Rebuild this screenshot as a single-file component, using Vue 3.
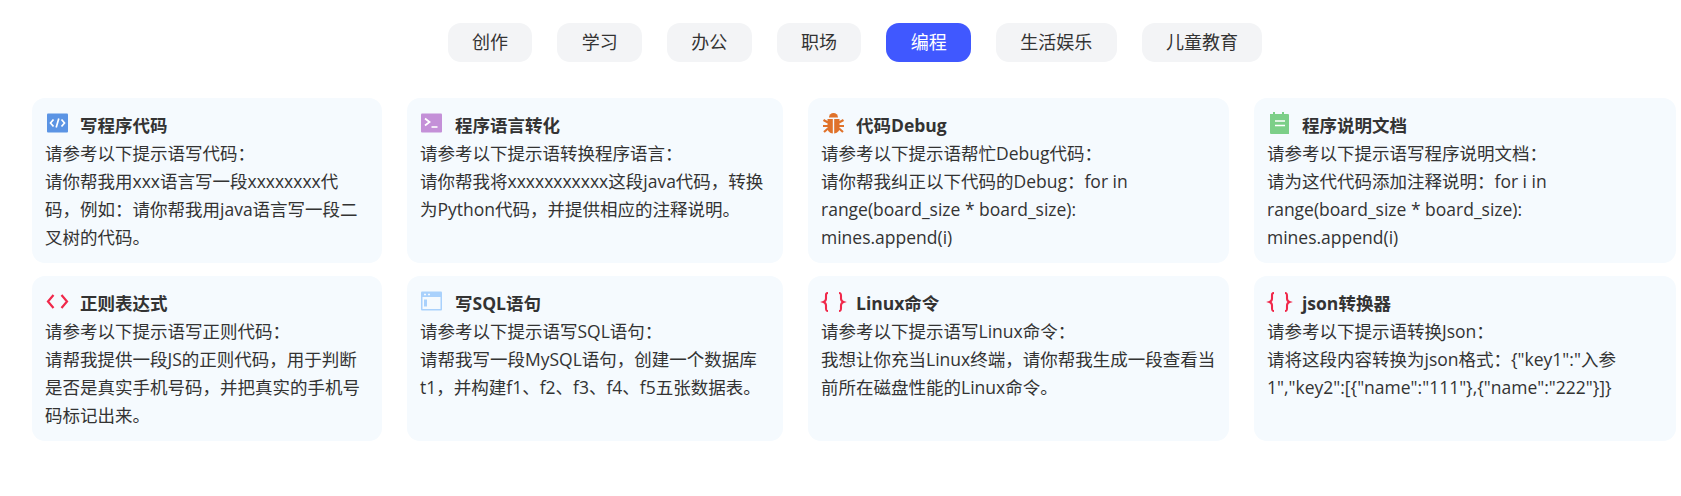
<template>
  <div class="page">
    <!-- 分类标签 -->
    <div class="tabs">
      <div
        v-for="tab in tabs"
        :key="tab"
        class="tab"
        :class="{ active: tab === activeTab }"
      >
        {{ tab }}
      </div>
    </div>

    <!-- 提示语卡片 -->
    <div class="cards">
      <div v-for="card in cards" :key="card.title" class="card">
        <div class="card-title">
          <svg class="icon" viewBox="0 0 24 24" width="24" height="24">
            <template v-if="card.icon === 'code'">
              <rect x="2" y="2.5" width="21" height="19" rx="1" fill="#5b94e4" />
              <path d="M8.5 8.5 5.5 12l3 3.500M16.500 8.500l3 3.500-3 3.500M13.800 7.500l-2.600 9" fill="none" stroke="#fff" stroke-width="1.700" />
            </template>
            <template v-else-if="card.icon === 'terminal'">
              <rect x="1" y="2.500" width="21" height="19" rx="1" fill="#c490d8" />
              <path d="M5 7.500 9.500 11 5 14.500" fill="none" stroke="#fff" stroke-width="1.800" />
              <path d="M11.500 16h6" fill="none" stroke="#fff" stroke-width="1.600" />
            </template>
            <template v-else-if="card.icon === 'bug'">
              <path d="M8 6.500a4.500 4.500 0 0 1 9 0z" fill="#e0722a" />
              <path d="M6.500 8h5.300v14.500C9 22.300 6.500 20 6.500 17.500zM13.200 8h5.300v9.500c0 2.500-2.500 4.800-5.300 5z" fill="#e0722a" />
              <path d="M2.500 9 7 11.500M22.500 9 18 11.500M2 15h5M23 15h-5M3 21l4-3.500M22 21l-4-3.500" fill="none" stroke="#e0722a" stroke-width="2.200" />
            </template>
            <template v-else-if="card.icon === 'note'">
              <path d="M3 3h3V1h2v2h7V1h2v2h4a1 1 0 0 1 1 1v19H4a1 1 0 0 1-1-1z" fill="#7ccf88" />
              <path d="M8 10h10M8 14.500h10" fill="none" stroke="#fff" stroke-width="1.700" />
            </template>
            <template v-else-if="card.icon === 'angle'">
              <path d="M8.500 6 3 12.500 8.500 19M16.500 6 22 12.500 16.500 19" fill="none" stroke="#f0284a" stroke-width="2.200" />
            </template>
            <template v-else-if="card.icon === 'window'">
              <rect x="1" y="2.500" width="21" height="19" rx="1" fill="#a9d1fc" />
              <rect x="2.500" y="8" width="18" height="12" fill="#f5fafe" />
              <rect x="4" y="10.500" width="3" height="7" fill="#a9d1fc" />
              <path d="M4 5.500h2M8 5.500h2" fill="none" stroke="#f5fafe" stroke-width="1.600" />
            </template>
            <template v-else>
              <path d="M7 4C5 4 5 5 5 7v2.500C5 11 4 12.500 2.500 13 4 13.500 5 15 5 16.500V19c0 2 0 3 2 3M18 4c2 0 2 1 2 3v2.500c0 1.500 1 3 2.500 3.500-1.500.5-2.500 2-2.500 3.500V19c0 2 0 3-2 3" fill="none" stroke="#f0284a" stroke-width="2.100" />
            </template>
          </svg>
          <span>{{ card.title }}</span>
        </div>
        <div v-for="line in card.lines" :key="line" class="card-line">{{ line }}</div>
      </div>
    </div>
  </div>
</template>

<script setup>
const activeTab = '编程'

const tabs = ['创作', '学习', '办公', '职场', '编程', '生活娱乐', '儿童教育']

const cards = [
  {
    icon: 'code',
    title: '写程序代码',
    lines: ['请参考以下提示语写代码：', '请你帮我用xxx语言写一段xxxxxxxx代', '码，例如：请你帮我用java语言写一段二', '叉树的代码。']
  },
  {
    icon: 'terminal',
    title: '程序语言转化',
    lines: ['请参考以下提示语转换程序语言：', '请你帮我将xxxxxxxxxxx这段java代码，转换', '为Python代码，并提供相应的注释说明。']
  },
  {
    icon: 'bug',
    title: '代码Debug',
    lines: ['请参考以下提示语帮忙Debug代码：', '请你帮我纠正以下代码的Debug：for in', 'range(board_size * board_size):', 'mines.append(i)']
  },
  {
    icon: 'note',
    title: '程序说明文档',
    lines: ['请参考以下提示语写程序说明文档：', '请为这代代码添加注释说明：for i in', 'range(board_size * board_size):', 'mines.append(i)']
  },
  {
    icon: 'angle',
    title: '正则表达式',
    lines: ['请参考以下提示语写正则代码：', '请帮我提供一段JS的正则代码，用于判断', '是否是真实手机号码，并把真实的手机号', '码标记出来。']
  },
  {
    icon: 'window',
    title: '写SQL语句',
    lines: ['请参考以下提示语写SQL语句：', '请帮我写一段MySQL语句，创建一个数据库', 't1，并构建f1、f2、f3、f4、f5五张数据表。']
  },
  {
    icon: 'brace',
    title: 'Linux命令',
    lines: ['请参考以下提示语写Linux命令：', '我想让你充当Linux终端，请你帮我生成一段查看当', '前所在磁盘性能的Linux命令。']
  },
  {
    icon: 'brace',
    title: 'json转换器',
    lines: ['请参考以下提示语转换Json：', '请将这段内容转换为json格式：{"key1":"入参', '1","key2":[{"name":"111"},{"name":"222"}]}']
  }
]
</script>

<style>
html,
body {
  background: #fff;
}
</style>

<style scoped>
.page {
  width: 1644px;
  margin-left: 32px;
  padding-top: 23px;
  font-family: "Open Sans", "Noto Sans CJK SC", sans-serif;
  color: #333;
}

.tabs {
  display: flex;
  justify-content: center;
  gap: 24.9px;
  padding-left: 2px;
}

.tab {
  height: 39px;
  padding: 0 24.4px;
  line-height: 39px;
  font-size: 18px;
  color: #333;
  background-color: #f3f4f6;
  border-radius: 13px;
}

.tab.active {
  color: #fff;
  background-color: #4058ff;
}

.cards {
  display: grid;
  grid-template-columns: 350px 376px 421px 422px;
  grid-auto-rows: 165px;
  gap: 13px 25px;
  margin-top: 36px;
}

.card {
  padding: 13px;
  background-color: #f5fafe;
  border-radius: 13px;
  font-size: 17.5px;
  line-height: 28px;
}

.card-title {
  display: flex;
  align-items: center;
  height: 28px;
  font-weight: 700;
}

.icon {
  flex: none;
  margin-top: -4px;
  margin-right: 11px;
  overflow: visible;
}

.card-line {
  white-space: nowrap;
}
</style>
